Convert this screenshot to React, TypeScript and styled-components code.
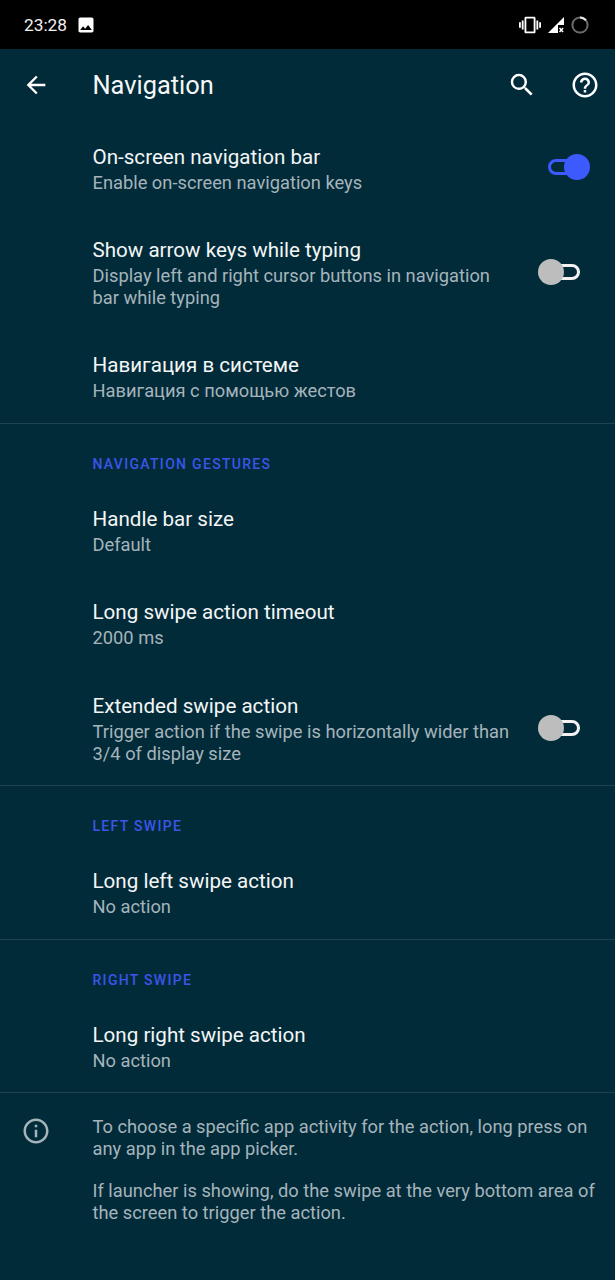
import styled, {createGlobalStyle} from "styled-components";
import {MdArrowBack, MdHelpOutline, MdImage, MdInfoOutline, MdSearch, MdVibration} from "react-icons/md";

const GlobalStyle = createGlobalStyle`
  html, body {
    margin: 0;
    padding: 0;
    background: #022b3a;
  }
  body {
    font-family: Roboto, "Noto Sans", sans-serif;
  }
`

const Page = styled.div`
  display: flex;
  flex-direction: column;
  width: 615px;
  height: 1280px;
  overflow: hidden;
  background: #022b3a;
`

const StatusBar = styled.div`
  display: flex;
  align-items: center;
  justify-content: space-between;
  flex: 0 0 49px;
  padding: 0 26px 0 24px;
  background: #000;
  color: #fff;
`

const StatusGroup = styled.div<{$gap: number}>`
  display: flex;
  align-items: center;
  gap: ${p => p.$gap}px;
`

const Clock = styled.span`
  font-size: 17.3px;
  color: #f2f2f2;
`

const Toolbar = styled.div`
  display: flex;
  align-items: center;
  flex: 0 0 71.5px;
  color: #fff;
`

const BackSlot = styled.div`
  display: flex;
  justify-content: center;
  width: 72px;
  margin-right: 20.5px;
`

const Title = styled.h1`
  flex: 1;
  margin: 0;
  font-size: 25.4px;
  font-weight: 400;
  color: #f5f7f7;
`

const ToolbarActions = styled.div`
  display: flex;
  align-items: center;
  gap: 33px;
  padding-right: 15px;
`

const Row = styled.div`
  display: flex;
  align-items: center;
  padding: 21px 24px 21px 92.5px;
`

const RowText = styled.div`
  flex: 1;
  min-width: 0;
`

const RowTitle = styled.div`
  font-size: 20.6px;
  line-height: 30px;
  color: #f4f6f6;
`

const RowSummary = styled.div`
  font-size: 18.3px;
  line-height: 21.6px;
  color: #a5b4ba;
`

const SwitchTrack = styled.div<{$on: boolean}>`
  position: relative;
  flex: none;
  box-sizing: border-box;
  width: 32px;
  height: 16px;
  margin-left: 33px;
  margin-right: 11px;
  border: 3px solid ${p => (p.$on ? "#3d5afe" : "#f2f2f2")};
  border-radius: 8px;
`

const SwitchKnob = styled.div<{$on: boolean}>`
  position: absolute;
  top: -8px;
  ${p => (p.$on ? "right: -13px;" : "left: -13px;")}
  width: 26px;
  height: 26px;
  border-radius: 50%;
  background: ${p => (p.$on ? "#3d5afe" : "#bdbdbd")};
`

const Divider = styled.div`
  flex: none;
  height: 1px;
  background: #1d434f;
`

const SectionHeader = styled.div`
  padding: 32px 24px 11px 92.5px;
  font-size: 14px;
  line-height: 16px;
  font-weight: 500;
  letter-spacing: 1.3px;
  color: #3a56e8;
`

const Footer = styled.div`
  display: flex;
  padding-top: 22.5px;
`

const FooterIcon = styled.div`
  flex: 0 0 92.5px;
  padding-left: 21px;
  box-sizing: border-box;
  color: #a5b4ba;
`

const FooterText = styled.div`
  flex: 1;
  padding-right: 20px;
  font-size: 18.3px;
  line-height: 22px;
  color: #a5b4ba;
`

const FooterParagraph = styled.p`
  margin: 0 0 20px;
`

const SignalIcon = () => (
  <svg width="16" height="16" viewBox="0 0 16 16">
    <path d="M0 16 L16 0 V8 H10 V16 Z" fill="#fff"/>
    <path d="M11.5 11 l3.6 4 M15.1 11 l-3.6 4" stroke="#fff" strokeWidth="1.5"/>
  </svg>
)

const BatterySpinner = () => (
  <svg width="18" height="18" viewBox="0 0 18 18" fill="none">
    <circle cx="9" cy="9" r="7.6" stroke="#6b6b6b" strokeWidth="2"/>
    <path d="M9 1.4 A7.6 7.6 0 0 1 15 4.4" stroke="#e8e8e8" strokeWidth="2"/>
  </svg>
)

const Switch = ({on}: {on: boolean}) => (
  <SwitchTrack $on={on}>
    <SwitchKnob $on={on}/>
  </SwitchTrack>
)

type SettingProps = {
  title: string,
  summary: string,
  on?: boolean,
}

const Setting = ({title, summary, on}: SettingProps) => (
  <Row>
    <RowText>
      <RowTitle>{title}</RowTitle>
      <RowSummary>{summary}</RowSummary>
    </RowText>
    {on !== undefined && <Switch on={on}/>}
  </Row>
)

export default function App() {
  return (
    <Page>
      <GlobalStyle/>
      <StatusBar>
        <StatusGroup $gap={9}>
          <Clock>23:28</Clock>
          <MdImage size={20}/>
        </StatusGroup>
        <StatusGroup $gap={7}>
          <MdVibration size={22}/>
          <SignalIcon/>
          <BatterySpinner/>
        </StatusGroup>
      </StatusBar>
      <Toolbar>
        <BackSlot><MdArrowBack size={28}/></BackSlot>
        <Title>Navigation</Title>
        <ToolbarActions>
          <MdSearch size={30}/>
          <MdHelpOutline size={30}/>
        </ToolbarActions>
      </Toolbar>
      <Setting title="On-screen navigation bar" summary="Enable on-screen navigation keys" on={true}/>
      <Setting title="Show arrow keys while typing" summary="Display left and right cursor buttons in navigation bar while typing" on={false}/>
      <Setting title="Навигация в системе" summary="Навигация с помощью жестов"/>
      <Divider/>
      <SectionHeader>NAVIGATION GESTURES</SectionHeader>
      <Setting title="Handle bar size" summary="Default"/>
      <Setting title="Long swipe action timeout" summary="2000 ms"/>
      <Setting title="Extended swipe action" summary="Trigger action if the swipe is horizontally wider than 3/4 of display size" on={false}/>
      <Divider/>
      <SectionHeader>LEFT SWIPE</SectionHeader>
      <Setting title="Long left swipe action" summary="No action"/>
      <Divider/>
      <SectionHeader>RIGHT SWIPE</SectionHeader>
      <Setting title="Long right swipe action" summary="No action"/>
      <Divider/>
      <Footer>
        <FooterIcon><MdInfoOutline size={30}/></FooterIcon>
        <FooterText>
          <FooterParagraph>To choose a specific app activity for the action, long press on any app in the app picker.</FooterParagraph>
          <FooterParagraph>If launcher is showing, do the swipe at the very bottom area of the screen to trigger the action.</FooterParagraph>
        </FooterText>
      </Footer>
    </Page>
  )
}
